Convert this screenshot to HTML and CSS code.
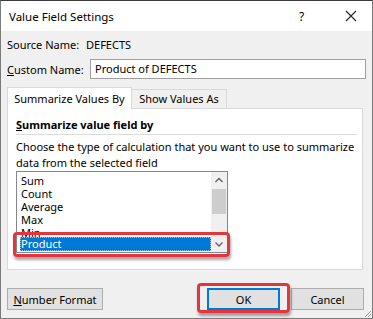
FILE: index.html
```
<!DOCTYPE html>
<html lang="en">
<head>
<meta charset="UTF-8" />
<title>Value Field Settings</title>
<link rel="stylesheet" href="styles.css">
</head>
<body>
<div class="window">
  <div class="titlebar">
    <span class="title">Value Field Settings</span>
    <span class="help">?</span>
    <svg class="close" width="12" height="12" viewBox="0 0 12 12"><path d="M1 1L11 11M11 1L1 11" stroke="#222" stroke-width="1.1" fill="none"/></svg>
  </div>

  <div class="content">
    <div class="row source">
      <span class="lbl">Source Name:</span>
      <span>DEFECTS</span>
    </div>
    <div class="row custom">
      <label class="lbl"><u>C</u>ustom Name:</label>
      <div class="textbox">Product of DEFECTS</div>
    </div>

    <div class="tabs">
      <div class="tab active">Summarize Values By</div>
      <div class="tab">Show Values As</div>
    </div>
    <div class="panel">
      <div class="heading"><u>S</u>ummarize value field by</div>
      <div class="desc">Choose the type of calculation that you want to use to summarize<br>data from the selected field</div>
      <div class="listbox">
        <ul class="items">
          <li>Sum</li>
          <li>Count</li>
          <li>Average</li>
          <li>Max</li>
          <li>Min</li>
          <li class="selected">Product</li>
        </ul>
        <div class="scrollbar">
          <svg class="arrow" width="16" height="16" viewBox="0 0 16 16"><path d="M4.5 10L8 6.5L11.5 10" stroke="#606060" stroke-width="1.3" fill="none"/></svg>
          <div class="thumb"></div>
          <div class="track"></div>
          <svg class="arrow" width="16" height="16" viewBox="0 0 16 16"><path d="M4.5 6.5L8 10L11.5 6.5" stroke="#606060" stroke-width="1.3" fill="none"/></svg>
        </div>
        <div class="mark mark-list"></div>
      </div>
    </div>

    <div class="buttons">
      <button class="btn format"><u>N</u>umber Format</button>
      <div class="spacer"></div>
      <div class="ok-wrap">
        <button class="btn default">OK</button>
        <div class="mark mark-ok"></div>
      </div>
      <button class="btn cancel">Cancel</button>
    </div>
  </div>
  <svg class="grip" width="10" height="10" viewBox="0 0 10 10"><path d="M9 3L3 9M9 6L6 9" stroke="#999" stroke-width="1" fill="none"/></svg>
</div>
</body>
</html>
```

FILE: styles.css
```
body {
    margin: 0;
    font-family: "Noto Sans", "Open Sans", sans-serif;
    font-size: 11px;
    color: #000;
    background: #f0f0f0;
}

.window {
    position: relative;
    width: 373px;
    height: 319px;
    box-sizing: border-box;
    border: 1px solid #7a7a7a;
    border-top-color: #3a3a3a;
    background: #f0f0f0;
    overflow: hidden;
    white-space: nowrap;
}

.titlebar {
    display: flex;
    align-items: center;
    height: 30px;
    background: #fff;
    padding-left: 8px;
}

.title {
    flex: 1;
    font-size: 11.5px;
}

.help {
    width: 12px;
    margin-right: 34px;
    font-size: 12px;
}

.close {
    margin-right: 15px;
}

.content {
    padding: 0 6px;
}

.row {
    display: flex;
    align-items: center;
}

.lbl {
    width: 83px;
    flex-shrink: 0;
}

.source {
    margin-top: 5px;
    height: 16px;
}

.source .lbl {
    width: 79px;
}

.custom {
    margin-top: 7px;
}

.textbox {
    width: 276px;
    height: 20px;
    box-sizing: border-box;
    border: 1px solid #a0a0a0;
    background: #fff;
    padding: 1px 4px;
    line-height: 16px;
}

.tabs {
    display: flex;
    align-items: flex-end;
    margin-top: 8px;
    height: 21px;
}

.tab {
    width: 95px;
    height: 19px;
    box-sizing: border-box;
    border: 1px solid #d9d9d9;
    border-left: none;
    border-bottom: none;
    text-align: center;
    line-height: 18px;
    background: #f0f0f0;
}

.tab.active {
    width: 125px;
    height: 22px;
    margin-bottom: -1px;
    border-left: 1px solid #d9d9d9;
    background: #fff;
    line-height: 21px;
    position: relative;
    z-index: 1;
}

.panel {
    width: 356px;
    height: 162px;
    box-sizing: border-box;
    border: 1px solid #d9d9d9;
    background: #fff;
    padding: 8px 5px 0 8px;
}

.heading {
    font-weight: bold;
    line-height: 16px;
    padding-bottom: 1px;
    border-bottom: 1px solid #dcdcdc;
}

.desc {
    margin-top: 4px;
    line-height: 16px;
}

.listbox {
    position: relative;
    display: flex;
    width: 212px;
    height: 82px;
    box-sizing: border-box;
    border: 1px solid #828790;
    background: #fff;
}

.items {
    flex: 1;
    list-style: none;
    margin: 0;
    padding: 2px 0 0 3px;
    overflow: hidden;
}

.items li {
    height: 13px;
    line-height: 13px;
    padding-left: 1px;
}

.items li.selected {
    position: relative;
    margin-top: -2px;
    background: #0078d7;
    color: #fff;
    height: 14px;
    line-height: 14px;
    outline: 1px dotted #8cc0ec;
    outline-offset: -1px;
}

.scrollbar {
    width: 16px;
    display: flex;
    flex-direction: column;
    background: #f0f0f0;
}

.arrow {
    display: block;
    width: 16px;
    height: 16px;
}

.thumb {
    height: 25px;
    background: #cdcdcd;
    margin: 1px 1px 0 1px;
}

.track {
    flex: 1;
}

.mark {
    position: absolute;
    border: 3px solid #e3353b;
    border-radius: 4px;
    box-shadow: 1px 3px 3px rgba(0, 0, 0, 0.35);
    pointer-events: none;
}

.mark-list {
    left: -4px;
    top: 60px;
    width: 211px;
    height: 19px;
}

.buttons {
    display: flex;
    margin-top: 18px;
}

.btn {
    font-family: inherit;
    font-size: 11px;
    height: 22px;
    box-sizing: border-box;
    border: 1px solid #adadad;
    background: #e1e1e1;
    padding: 0;
    color: #000;
}

.format {
    width: 96px;
}

.spacer {
    flex: 1;
}

.ok-wrap {
    position: relative;
    margin-right: 11px;
}

.btn.default {
    display: block;
    width: 73px;
    border: 2px solid #0078d7;
}

.mark-ok {
    left: -10px;
    top: -5px;
    width: 87px;
    height: 24px;
}

.cancel {
    width: 73px;
    margin-right: 2px;
}

.grip {
    position: absolute;
    right: 0;
    bottom: 0;
}
```
